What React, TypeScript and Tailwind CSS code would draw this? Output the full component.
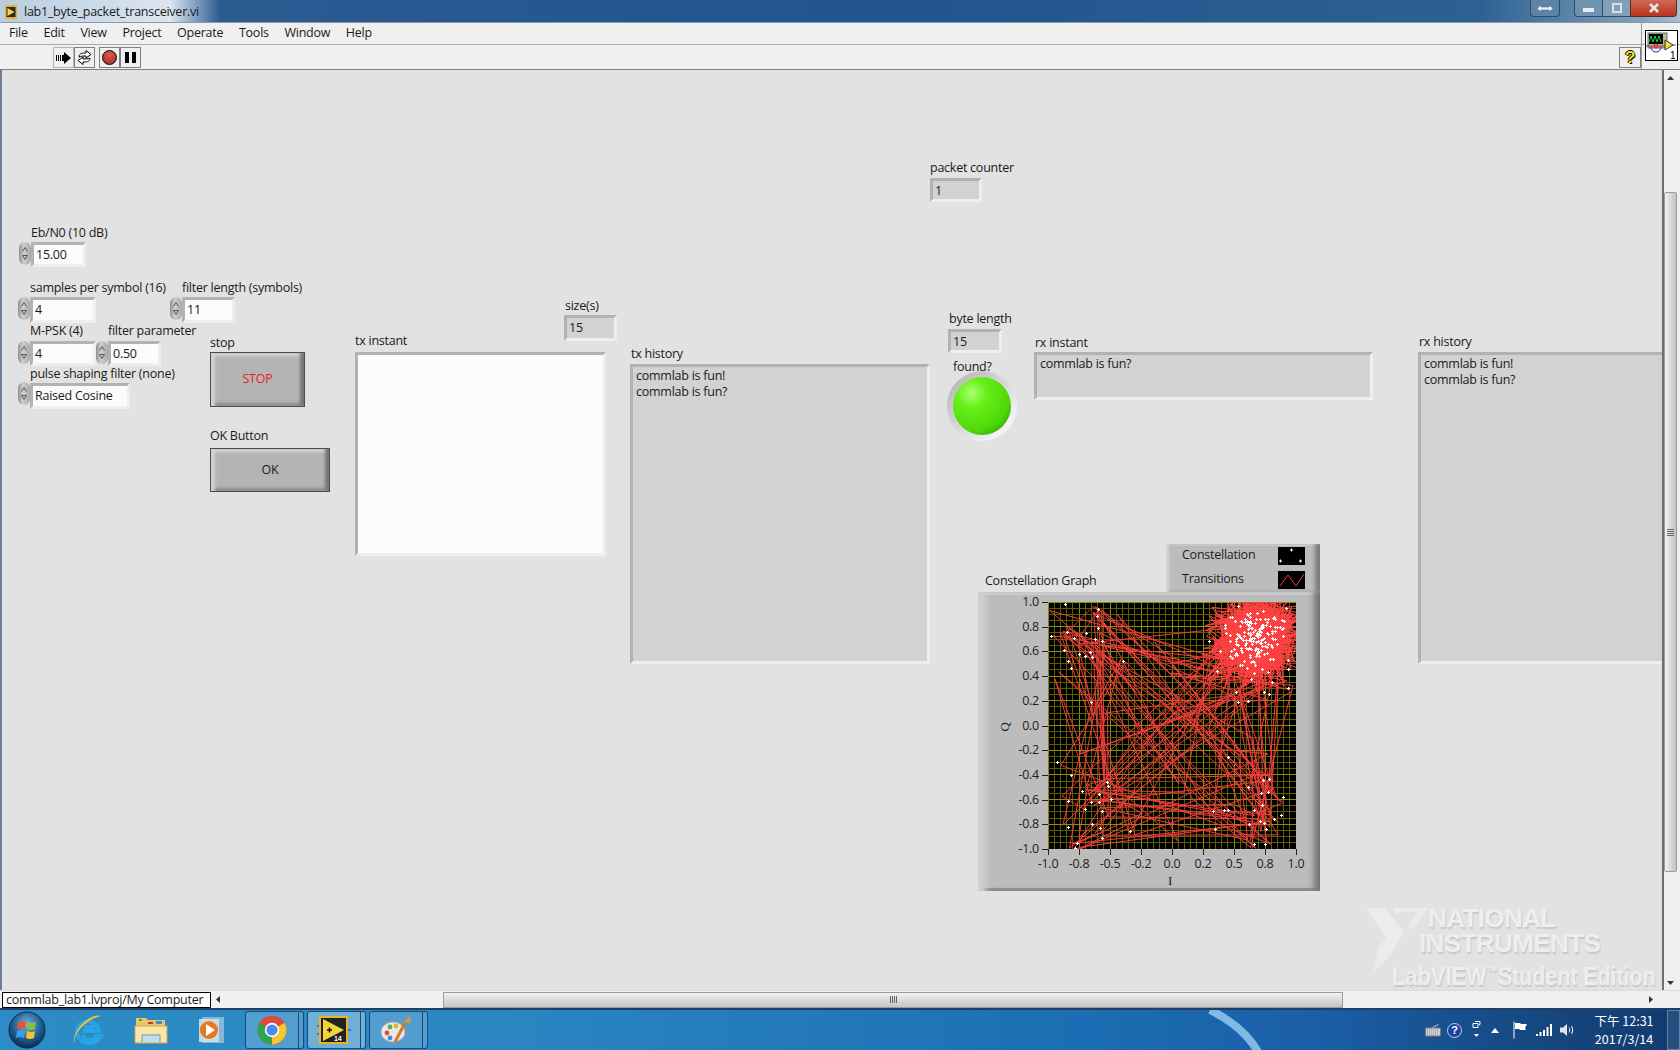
import React from "react";

type BoxProps = { className: string; children?: React.ReactNode };

const Label = ({ className, children }: BoxProps) => (
  <div className={`absolute h-[18px] whitespace-nowrap text-[12.5px] leading-[18px] text-[#1a1a1a] ${className}`}>{children}</div>
);

// sunken LabVIEW style frame, dark on top/left, light on bottom/right
const Frame = ({ className, children }: BoxProps) => (
  <div className={`absolute box-border border-[3px] border-t-[#b2b2b2] border-l-[#b2b2b2] border-r-[#eeeeee] border-b-[#eeeeee] text-[12.5px] leading-[16px] text-[#1a1a1a] ${className}`}>
    {children}
  </div>
);

// single line numeric or ring control
const Field = ({ className, children }: BoxProps) => (
  <Frame className={`px-[2px] pt-[2px] ${className}`}>{children}</Frame>
);

const Spinner = ({ className }: { className: string }) => (
  <div className={`absolute flex h-[23px] w-[12px] flex-col items-center justify-center gap-[3px] rounded-full bg-[linear-gradient(90deg,#8f8f8f,#cfcfcf_40%,#a8a8a8)] ${className}`}>
    <svg width="6" height="5" viewBox="0 0 6 5"><path d="M3 0.5 L5.5 4.5 M3 0.5 L0.5 4.5" stroke="#555" fill="none" /></svg>
    <svg width="6" height="5" viewBox="0 0 6 5"><path d="M0.5 0.5 H5.5 L3 4.5 Z" stroke="#555" fill="none" /></svg>
  </div>
);

const Bevel = ({ className, children }: BoxProps) => (
  <div className={`absolute box-border flex items-center justify-center border border-[#4c4c4c] bg-[#b4b4b4] text-[12.5px] shadow-[inset_5px_0_3px_-1px_#d2d2d2,inset_-5px_0_3px_-1px_#777777,inset_0_4px_3px_-1px_#d6d6d6,inset_0_-4px_3px_-1px_#8a8a8a] ${className}`}>
    {children}
  </div>
);

function mulberry(seed: number) {
  return () => {
    seed |= 0;
    seed = (seed + 0x6d2b79f5) | 0;
    let t = Math.imul(seed ^ (seed >>> 15), 1 | seed);
    t = (t + Math.imul(t ^ (t >>> 7), 61 | t)) ^ t;
    return ((t ^ (t >>> 14)) >>> 0) / 4294967296;
  };
}

// marker spots read off the reference, in zoomed crop pixels
const spots = [
  [436, 220], [536, 236], [532, 258], [535, 292], [442, 304], [500, 307], [394, 316], [463, 322], [527, 325], [547, 331],
  [432, 360], [511, 365], [478, 370], [496, 376], [517, 380], [445, 391], [610, 391], [454, 412], [514, 514],
  [412, 694], [454, 733], [562, 755], [565, 767], [488, 781], [538, 790], [574, 807], [446, 811], [515, 815], [538, 815],
  [495, 835], [547, 841], [517, 880], [446, 889], [542, 892], [632, 901], [547, 922], [472, 937], [465, 952],
  [925, 679], [1048, 745], [1030, 750], [985, 771], [1045, 785], [1024, 789], [1090, 799], [1026, 824], [913, 838], [924, 838],
  [1003, 838], [881, 841], [1083, 853], [1064, 865], [1022, 872], [1034, 877], [988, 880], [885, 895], [1040, 895], [1004, 940], [1037, 940],
  [950, 484], [1033, 484], [1048, 490], [955, 515], [985, 511], [1105, 472], [868, 331], [893, 421], [1057, 454], [994, 447],
].map(([x, y]) => [(x - 385) / 3, (y - 215) / 3]);

const rand = mulberry(20170314);
const gauss = () => (rand() + rand() + rand() + rand() - 2) * 1.7;

const cloud: number[][] = [];
for (let i = 0; i < 1100; i++) cloud.push([207 + gauss() * 20, 36 + gauss() * 19]);
const cloudMarks: number[][] = [];
for (let i = 0; i < 170; i++) cloudMarks.push([207 + gauss() * 15, 36 + gauss() * 15]);

// transitions mostly stay near the last symbol, some cross the whole plot
const walk: number[][] = [];
let at = 0;
for (let i = 0; i < 125; i++) {
  const r = rand();
  if (r < 0.08) {
    walk.push([206 + gauss() * 16, 38 + gauss() * 16]);
  } else {
    at = r < 0.42 ? (at + Math.floor(rand() * 7) + spots.length - 3) % spots.length : Math.floor(rand() * spots.length);
    const s = spots[at];
    walk.push([s[0] + (rand() - 0.5) * 14, s[1] + (rand() - 0.5) * 14]);
  }
  if (rand() < 0.4) walk.push([rand() * 248, rand() * 247]);
}

const toPoints = (pts: number[][]) => pts.map((p) => `${p[0].toFixed(1)},${p[1].toFixed(1)}`).join(" ");

const Grid = () => {
  const lines = [];
  for (let i = 0; i <= 40; i++) {
    const x = (i * 248) / 40;
    lines.push(<line key={`x${i}`} x1={x} x2={x} y1={0} y2={247} stroke={i % 5 === 0 ? "#8f8f00" : "#5e5e00"} />);
  }
  for (let i = 0; i <= 40; i++) {
    const y = (i * 247) / 40;
    lines.push(<line key={`y${i}`} x1={0} x2={248} y1={y} y2={y} stroke={i % 4 === 0 ? "#8f8f00" : "#5e5e00"} />);
  }
  return <g shapeRendering="crispEdges">{lines}</g>;
};

const Plus = ({ p }: { p: number[] }) => (
  <path d={`M${Math.round(p[0]) - 1.5} ${Math.round(p[1]) + 0.5}h3M${Math.round(p[0]) + 0.5} ${Math.round(p[1]) - 1.5}v3`} stroke="#ffffff" shapeRendering="crispEdges" />
);

const ConstellationPlot = () => (
  <svg width="248" height="247" viewBox="0 0 248 247" className="absolute left-[70px] top-[10px] bg-black">
    <Grid />
    <polyline points={toPoints(walk)} fill="none" stroke="#f33c3c" strokeWidth="1" />
    <polyline points={toPoints(cloud)} fill="none" stroke="#ff4242" strokeWidth="1" />
    {spots.map((p, i) => <Plus key={i} p={p} />)}
    {cloudMarks.map((p, i) => <Plus key={i} p={p} />)}
  </svg>
);

const yTicks = ["1.0", "0.8", "0.6", "0.4", "0.2", "0.0", "-0.2", "-0.4", "-0.6", "-0.8", "-1.0"];
const xTicks = ["-1.0", "-0.8", "-0.5", "-0.2", "0.0", "0.2", "0.5", "0.8", "1.0"];

const ConstellationGraph = () => (
  <>
    <div className="absolute left-[1166px] top-[474px] box-border h-[48px] w-[154px] overflow-hidden bg-[#bcbcbc] shadow-[inset_4px_0_3px_-1px_#d4d4d4,inset_-6px_0_4px_-1px_#7c7c7c,inset_0_2px_1px_#d8d8d8]">
      <div className="absolute left-[16px] top-[2px] text-[12.5px] leading-[18px] text-[#1c1c1c]">Constellation</div>
      <div className="absolute left-[16px] top-[26px] text-[12.5px] leading-[18px] text-[#1c1c1c]">Transitions</div>
      <svg className="absolute left-[112px] top-[3px]" width="27" height="18" viewBox="0 0 27 18">
        <rect width="27" height="18" fill="#000" />
        <path d="M12 3h3M13.5 1.5v3M1 14h3M2.5 12.5v3M21 14h3M22.5 12.5v3" stroke="#fff" />
      </svg>
      <svg className="absolute left-[112px] top-[27px]" width="27" height="18" viewBox="0 0 27 18">
        <rect width="27" height="18" fill="#000" />
        <path d="M2 15 L10 4 L18 15 L26 3" stroke="#e53a3a" fill="none" />
      </svg>
    </div>
    <div className="absolute left-[978px] top-[522px] h-[299px] w-[342px] overflow-hidden bg-[#bcbcbc] text-[12.5px] text-[#1c1c1c] shadow-[inset_12px_0_6px_-4px_#d0d0d0,inset_-9px_0_6px_-3px_#747474,inset_0_3px_1px_#d2d2d2,inset_0_-3px_1px_#8c8c8c]">
      <ConstellationPlot />
      {yTicks.map((t, i) => (
        <React.Fragment key={t}>
          <div className="absolute left-[11px] w-[50px] text-right leading-[16px]" style={{ top: 2 + (i * 247) / 10 }}>{t}</div>
          <div className="absolute left-[64px] h-px w-[6px] bg-[#222]" style={{ top: 10 + Math.round((i * 247) / 10) }} />
        </React.Fragment>
      ))}
      {xTicks.map((t, i) => (
        <React.Fragment key={t}>
          <div className="absolute top-[264px] w-[40px] text-center leading-[16px]" style={{ left: 50 + i * 31 }}>{t}</div>
          <div className="absolute top-[257px] h-[6px] w-px bg-[#222]" style={{ left: 70 + i * 31 }} />
        </React.Fragment>
      ))}
      <div className="absolute left-[190px] top-[281px] font-['Liberation_Serif',serif] text-[13px] leading-[16px]">I</div>
      <div className="absolute left-[22px] top-[127px] -rotate-90 font-['Liberation_Serif',serif] text-[13px] leading-[16px]">Q</div>
    </div>
  </>
);

const Watermark = () => (
  <div className="absolute left-[1360px] top-[830px] h-[160px] w-[300px] select-none whitespace-nowrap font-['Liberation_Sans',sans-serif] font-bold tracking-normal text-[#eeeeee] [text-shadow:1px_2px_1px_#c9c9c9]">
    <svg className="absolute left-[4px] top-[6px]" width="62" height="66" viewBox="0 0 62 66">
      <path d="M0 2 H18 L38 26 L24 50 L8 66 L12 42 L20 32 Z" fill="#ececec" />
      <path d="M26 2 H62 L46 24 L42 20 L52 6 H34 L30 8 Z" fill="#ececec" />
    </svg>
    <div className="absolute left-[66px] top-[6px] text-[26px] leading-[24px] tracking-[-0.6px]">NATIONAL</div>
    <div className="absolute left-[57px] top-[31px] text-[26px] leading-[24px] tracking-[-0.6px]">INSTRUMENTS</div>
    <div className="absolute left-[30px] top-[64px] origin-left scale-x-[0.84] text-[26px] leading-[24px]">LabVIEW</div>
    <div className="absolute left-[125px] top-[64px] text-[7px] leading-[10px]">TM</div>
    <div className="absolute left-[136px] top-[64px] origin-left scale-x-[0.82] text-[26px] leading-[24px]">Student Edition</div>
  </div>
);

const Led = () => (
  <div className="absolute left-[945px] top-[301px] flex h-[70px] w-[70px] items-center justify-center rounded-full bg-[linear-gradient(135deg,#b0b0b0,#f2f2f2_80%)]">
    <div className="h-[58px] w-[58px] rounded-full bg-[radial-gradient(circle_at_32%_28%,#aaff70_0,#66f018_26%,#4fd80a_66%,#2c7c08_100%)]" />
  </div>
);

const TitleBar = () => (
  <div className="flex h-[22px] shrink-0 items-center justify-between bg-[linear-gradient(90deg,#b9cde0_0,#dbe6f0_170px,#2a5c92_220px,#22548e_900px,#2d6192_1480px,#7fa0bb_1640px,#a9c0d2_100%)] pl-[5px]">
    <div className="flex items-center gap-[7px] pt-[2px]">
      <svg width="12" height="14" viewBox="0 0 12 14">
        <rect width="12" height="14" fill="#e9b227" />
        <rect x="1.5" y="2" width="9" height="10" fill="#2a2a2a" />
        <path d="M2.5 3 L9.5 7 L2.5 11 Z" fill="#f4d24a" />
      </svg>
      <span className="text-[12.5px] text-[#1a1a1a]">lab1_byte_packet_transceiver.vi</span>
    </div>
    <div className="flex h-[18px] self-start pr-[3px]">
      <div className="mr-[14px] flex h-[17px] w-[30px] items-center justify-center rounded-b-[4px] border border-t-0 border-[#2f4a66] bg-[#5c84a6] text-white">
        <svg width="18" height="9" viewBox="0 0 18 9"><path d="M1 4.5 L5 1 V3 H13 V1 L17 4.5 L13 8 V6 H5 V8 Z" fill="#e8eef4" stroke="#44607c" strokeWidth="0.5" /></svg>
      </div>
      <div className="flex h-[17px] w-[29px] items-center justify-center rounded-bl-[4px] border border-t-0 border-[#2f4a66] bg-[#6f93ae]">
        <div className="mt-[4px] h-[4px] w-[11px] bg-[#e6ecf1]" />
      </div>
      <div className="flex h-[17px] w-[27px] items-center justify-center border-b border-[#2f4a66] bg-[#7fa0b8]">
        <div className="h-[10px] w-[10px] border-2 border-[#d6dfe6]" />
      </div>
      <div className="flex h-[17px] w-[47px] items-center justify-center rounded-br-[4px] border border-t-0 border-[#5c2a22] bg-[linear-gradient(180deg,#cf6a55,#b8341f)]">
        <svg width="12" height="10" viewBox="0 0 12 10"><path d="M2 1 L10 9 M10 1 L2 9" stroke="#efe6e2" strokeWidth="2.6" /></svg>
      </div>
    </div>
  </div>
);

const menus = ["File", "Edit", "View", "Project", "Operate", "Tools", "Window", "Help"];

const MenuBar = () => (
  <div className="flex h-[23px] shrink-0 items-center gap-[15.7px] border-b border-[#a9a9a9] border-t border-t-[#8a9aa8] bg-[#f0f0f0] pl-[9px] pr-[38px] text-[12.5px] text-[#1a1a1a]">
    {menus.map((m) => <span key={m}>{m}</span>)}
  </div>
);

const ToolButton = ({ children, light }: { children: React.ReactNode; light?: boolean }) => (
  <div className={`box-border flex h-[21px] w-[21px] items-center justify-center border ${light ? "border-[#b5b5b5]" : "border-[#808080]"}`}>{children}</div>
);

const Toolbar = () => (
  <div className="flex h-[25px] shrink-0 items-center justify-between border-b border-[#7d7d7d] bg-[#f0f0f0] pl-[53px] pr-[39px] pt-px">
    <div className="flex items-center gap-[4px]">
      <div className="flex">
        <ToolButton light>
          <svg width="16" height="12" viewBox="0 0 16 12"><path d="M0 3h1v6H0zM2 3h1v6H2zM4 3h1v6H4zM6 3h2V0l7 6-7 6V9H6z" fill="#000" /></svg>
        </ToolButton>
        <ToolButton>
          <svg width="17" height="15" viewBox="0 0 17 15">
            <path d="M3 7 C3 3 7 3 10 3 V0.5 L15 4.500 L10 8 V6 C7 6 5 6 3 7 Z" fill="#fff" stroke="#000" />
            <path d="M14 8 C14 12 10 12 7 12 V14.5 L2 10.500 L7 7 V9 C10 9 12 9 14 8 Z" fill="#fff" stroke="#000" />
          </svg>
        </ToolButton>
      </div>
      <div className="flex">
        <ToolButton>
          <div className="h-[15px] w-[15px] rounded-full border border-black bg-[radial-gradient(circle_at_50%_30%,#d85a50,#a92a24)]" />
        </ToolButton>
        <ToolButton>
          <div className="flex gap-[3px]">
            <div className="h-[11px] w-[4px] bg-black" />
            <div className="h-[11px] w-[4px] bg-black" />
          </div>
        </ToolButton>
      </div>
    </div>
    <div className="flex h-[21px] w-[22px] items-center justify-center border border-[#808080] font-['Liberation_Sans',sans-serif] text-[17px] font-bold leading-none text-[#f4e200] [text-shadow:1px_1px_0_#000,-1px_0_0_#000,0_-1px_0_#000]">?</div>
  </div>
);

const VScrollbar = () => (
  <div className="flex w-[18px] shrink-0 flex-col border-l-2 border-[#6f6f6f] bg-[#f0f0f0] pr-[3px]">
    <div className="flex h-[16px] shrink-0 items-center justify-center text-[#222]">
      <svg width="7" height="4" viewBox="0 0 7 4"><path d="M0 4 L3.5 0 L7 4 Z" fill="#333" /></svg>
    </div>
    <div className="h-[106px] shrink-0" />
    <div className="flex h-[680px] shrink-0 items-center justify-center rounded-[2px] border border-[#9a9a9a] bg-[linear-gradient(90deg,#f2f2f2,#d4d4d4_60%,#c4c4c4)]">
      <div className="flex w-[7px] flex-col gap-[1px]">
        <div className="h-px bg-[#666]" /><div className="h-px bg-[#666]" /><div className="h-px bg-[#666]" /><div className="h-px bg-[#666]" />
      </div>
    </div>
    <div className="flex-1" />
    <div className="flex h-[14px] shrink-0 items-center justify-center">
      <svg width="7" height="4" viewBox="0 0 7 4"><path d="M0 0 L3.5 4 L7 0 Z" fill="#333" /></svg>
    </div>
  </div>
);

const HScrollbar = () => (
  <div className="flex h-[18px] shrink-0 items-center border-t border-[#dadada] bg-[#f0f0f0] pl-[2px] pr-[3px]">
    <div className="box-border h-[16px] w-[209px] shrink-0 whitespace-nowrap border border-black bg-white pl-[3px] text-[12.5px] leading-[13px] text-[#1a1a1a]">commlab_lab1.lvproj/My Computer</div>
    <svg className="ml-[5px] shrink-0" width="4" height="7" viewBox="0 0 4 7"><path d="M4 0 L0 3.5 L4 7 Z" fill="#333" /></svg>
    <div className="w-[223px] shrink-0" />
    <div className="flex h-[16px] w-[900px] shrink-0 items-center justify-center border border-[#9a9a9a] bg-[linear-gradient(180deg,#f2f2f2,#d6d6d6_60%,#c6c6c6)]">
      <div className="flex h-[7px] gap-[1px]">
        <div className="w-px bg-[#666]" /><div className="w-px bg-[#666]" /><div className="w-px bg-[#666]" /><div className="w-px bg-[#666]" />
      </div>
    </div>
    <div className="flex-1" />
    <svg className="mr-[24px] shrink-0" width="4" height="7" viewBox="0 0 4 7"><path d="M0 0 L4 3.5 L0 7 Z" fill="#333" /></svg>
  </div>
);

const StartOrb = () => (
  <svg width="38" height="38" viewBox="0 0 38 38">
    <defs>
      <radialGradient id="orb" cx="50%" cy="35%" r="65%">
        <stop offset="0" stopColor="#7fb4dc" />
        <stop offset="0.6" stopColor="#1f5f94" />
        <stop offset="1" stopColor="#0b2c4e" />
      </radialGradient>
    </defs>
    <circle cx="19" cy="19" r="18" fill="url(#orb)" stroke="#0d2b47" />
    <path d="M10 12 Q14 9 18 11 L17 18 Q13 16 9 18 Z" fill="#e8552e" />
    <path d="M20 11 Q24 13 28 11 L27 18 Q23 20 19 18 Z" fill="#82c341" />
    <path d="M9 20 Q13 18 17 20 L16 27 Q12 25 8 27 Z" fill="#3a9ee0" />
    <path d="M19 20 Q23 22 27 20 L26 27 Q22 29 18 27 Z" fill="#f7c325" />
  </svg>
);

const IEIcon = () => (
  <svg width="32" height="34" viewBox="0 0 32 34">
    <path d="M5 21 A11 11 0 1 1 27 18 H11 M12 14 H22 M11 22 A7 7 0 0 0 24 23 H29 A13 13 0 0 1 5 21" fill="none" stroke="#27a4e4" strokeWidth="4" />
    <path d="M3 30 C0 22 14 6 29 3 C24 1 16 5 10 11 C4 17 0 27 3 30 Z" fill="#f2c438" />
  </svg>
);

const FolderIcon = () => (
  <svg width="34" height="30" viewBox="0 0 34 30">
    <path d="M2 3 H12 L14 5 H31 V14 H2 Z" fill="#e9c66a" />
    <rect x="5" y="4" width="3" height="2" fill="#46a049" />
    <rect x="14" y="7" width="5" height="2" fill="#c8382c" />
    <rect x="22" y="6" width="6" height="3" fill="#3a8fd6" />
    <path d="M1 11 H33 V28 H1 Z" fill="#f8e6a8" stroke="#c9a95a" />
    <path d="M8 27 V20 H26 V27" fill="#c4dced" stroke="#7a93a6" />
  </svg>
);

const MediaIcon = () => (
  <svg width="28" height="32" viewBox="0 0 28 32">
    <rect x="4" y="3" width="22" height="26" fill="#9bc3dd" opacity="0.8" />
    <rect x="1" y="5" width="20" height="23" fill="#cfe0ea" opacity="0.9" />
    <circle cx="11" cy="16" r="9" fill="#e9771f" />
    <path d="M8 10 L17 16 L8 22 Z" fill="#ffffff" />
  </svg>
);

const ChromeIcon = () => (
  <svg width="30" height="30" viewBox="0 0 30 30">
    <circle cx="15" cy="15" r="14.5" fill="#dd4b3e" />
    <path d="M15 15 L27.6 7.8 A14.5 14.5 0 0 1 15 29.5 Z" fill="#f7c52d" />
    <path d="M15 15 L15 29.5 A14.5 14.5 0 0 1 2.4 7.8 Z" fill="#2fa44f" />
    <circle cx="15" cy="15" r="7.2" fill="#ffffff" />
    <circle cx="15" cy="15" r="5.6" fill="#4a8af4" />
  </svg>
);

const LabviewIcon = () => (
  <svg width="34" height="28" viewBox="0 0 34 28">
    <path d="M0 10h4M0 18h4M29 14h5" stroke="#3a78c0" strokeWidth="2" />
    <rect x="3" y="1" width="27" height="26" fill="#222" stroke="#e9b227" strokeWidth="2" />
    <path d="M6 3 L27 14 L6 25 Z" fill="#f2d33a" />
    <path d="M10 14h5M12.5 11.5v5" stroke="#111" strokeWidth="1.5" />
    <text x="17" y="25" fontSize="7" fontWeight="700" fill="#fff" fontFamily="Liberation Sans, sans-serif">14</text>
  </svg>
);

const PaintIcon = () => (
  <svg width="32" height="30" viewBox="0 0 32 30">
    <ellipse cx="13" cy="17" rx="12" ry="10" fill="#e8e8ea" stroke="#b0b0b8" />
    <circle cx="7" cy="18" r="2.4" fill="#e0483c" />
    <circle cx="10" cy="12" r="2.4" fill="#58b04a" />
    <circle cx="16" cy="11" r="2.4" fill="#e9b227" />
    <circle cx="10" cy="23" r="2.4" fill="#3f8ed6" />
    <path d="M15 27 L26 6" stroke="#d97a1e" strokeWidth="3" />
    <path d="M24 7 L30 0 L31 8 Z" fill="#c79a5c" />
  </svg>
);

const TaskButton = ({ className, children }: { className: string; children: React.ReactNode }) => (
  <div className="flex h-[38px] w-[59px] shrink-0">
    <div className={`flex w-[54px] items-center justify-center rounded-l-[3px] border border-[#174a78] ${className}`}>{children}</div>
    <div className={`w-[5px] rounded-r-[3px] border border-l-0 border-[#174a78] ${className}`} />
  </div>
);

const Taskbar = () => (
  <div className="relative flex h-[42px] shrink-0 items-center overflow-hidden border-t-[2px] border-[#1f3f66] bg-[linear-gradient(90deg,#2c8cc6_0,#2b86c2_30%,#1c6db3_65%,#1b5fa8_78%,#16477f_92%,#123a70_100%)]">
    <svg className="absolute left-[1196px] top-0" width="90" height="42" viewBox="0 0 90 42">
      <path d="M14 0 C34 10 52 24 62 42" fill="none" stroke="#9ccdf2" strokeWidth="8" opacity="0.8" />
    </svg>
    <div className="relative flex h-full w-full items-center">
      <div className="ml-[8px] w-[56px] shrink-0"><StartOrb /></div>
      <div className="ml-[8px] flex w-[62px] shrink-0 justify-start"><IEIcon /></div>
      <div className="flex w-[64px] shrink-0 justify-start"><FolderIcon /></div>
      <div className="flex w-[47px] shrink-0 justify-start"><MediaIcon /></div>
      <TaskButton className="bg-[#ffffff30]"><ChromeIcon /></TaskButton>
      <div className="ml-[3px]"><TaskButton className="bg-[#ffffff55]"><LabviewIcon /></TaskButton></div>
      <div className="ml-[3px]"><TaskButton className="bg-[#ffffff30]"><PaintIcon /></TaskButton></div>
      <div className="ml-auto flex h-full items-center">
        <svg width="16" height="14" viewBox="0 0 16 14"><rect x="0.5" y="5" width="15" height="8" rx="1" fill="#cfd3d6" stroke="#777" /><path d="M2 7h12M2 9h12M2 11h12" stroke="#888" strokeDasharray="1 1" /><path d="M8 5 C8 2 13 4 13 1" stroke="#ccc" fill="none" /></svg>
        <div className="ml-[6px] flex h-[15px] w-[15px] items-center justify-center rounded-full border border-[#c4d2e0] bg-[#1d3fa8] font-['Liberation_Sans',sans-serif] text-[11px] font-bold leading-none text-white">?</div>
        <svg className="ml-[10px]" width="9" height="20" viewBox="0 0 9 20"><path d="M3 1.5h5v3h-1M1 3.5h5v4H1z" fill="none" stroke="#fff" /><path d="M2 14h5l-2.5 3z" fill="#fff" /></svg>
        <svg className="ml-[10px]" width="8" height="5" viewBox="0 0 8 5"><path d="M0 5 L4 0 L8 5 Z" fill="#fff" /></svg>
        <svg className="ml-[14px]" width="14" height="18" viewBox="0 0 14 18"><path d="M1 0.5 V17.5" stroke="#fff" /><path d="M2 2 H7 L8 3 H14 L12 7 L13 9 H7 L6 8 H2 Z" fill="#fff" /></svg>
        <svg className="ml-[9px]" width="16" height="12" viewBox="0 0 16 12"><path d="M0 10h2v2H0zM3.5 8h2v4h-2zM7 6h2v6H7zM10.5 3h2v9h-2zM14 0h2v12h-2z" fill="#fff" /></svg>
        <svg className="ml-[8px]" width="15" height="14" viewBox="0 0 15 14"><path d="M0 4.5h3L7 1v12L3 9.5H0z" fill="#dfe6ec" /><path d="M9 4.5c1 1.5 1 3.5 0 5M11.5 3c1.6 2.5 1.6 5.500 0 8" stroke="#fff" fill="none" /></svg>
        <div className="ml-[13px] w-[72px] text-center font-['Noto_Sans_CJK_TC','Liberation_Sans',sans-serif] text-[12.5px] leading-[18px] tracking-normal text-white">
          <div>下午 12:31</div>
          <div>2017/3/14</div>
        </div>
        <div className="ml-[7px] h-full w-[13px] border border-[#5c86a8] bg-[#ffffff18]" />
      </div>
    </div>
  </div>
);

export default function App() {
  return (
    <div className="flex h-[1050px] w-[1680px] flex-col overflow-hidden bg-[#e2e2e2] font-['Open_Sans','Liberation_Sans',sans-serif] tracking-[-0.25px]">
      <TitleBar />
      <div className="relative flex min-h-0 flex-1 flex-col">
        <MenuBar />
        <Toolbar />
        <div className="absolute right-[38px] top-0 h-[47px] w-px bg-[#9a9a9a]" />
        <div className="absolute left-[1645px] top-[8px] z-10 h-[31px] w-[33px] overflow-hidden border border-black bg-white">
          <svg width="31" height="29" viewBox="0 0 31 29">
            <rect x="2" y="2" width="19" height="15" fill="#b9b9a8" stroke="#666" />
            <rect x="3" y="3" width="14" height="10" fill="#000" />
            <path d="M3 11 L5 5 L7 11 L9 5 L11 11 L13 5 L15 11" stroke="#18d030" fill="none" />
            <path d="M0 15h19M20 14h10" stroke="#c02020" />
            <path d="M5 16 a5 5 0 0 0 10 0" fill="none" stroke="#2020c0" />
            <circle cx="10" cy="15" r="2" fill="none" stroke="#d02020" />
            <path d="M19 9 L27 14 L19 19 Z" fill="#f4e22a" stroke="#333" />
            <text x="24" y="28" fontSize="10" fill="#000" fontFamily="Liberation Sans, sans-serif">1</text>
          </svg>
        </div>
        <div className="flex min-h-0 flex-1 border-l-2 border-[#6c7f94]">
          <div className="relative flex-1 overflow-hidden bg-[#e2e2e2]">
            <Label className="left-[29px] top-[154px]">Eb/N0 (10 dB)</Label>
            <Spinner className="left-[17px] top-[172px]" />
            <Field className="left-[29px] top-[172px] h-[25px] w-[55px] bg-[#fbfbfb]">15.00</Field>

            <Label className="left-[28px] top-[209px]">samples per symbol (16)</Label>
            <Spinner className="left-[16px] top-[227px]" />
            <Field className="left-[28px] top-[227px] h-[26px] w-[66px] bg-[#fbfbfb]">4</Field>
            <Label className="left-[180px] top-[209px]">filter length (symbols)</Label>
            <Spinner className="left-[168px] top-[227px]" />
            <Field className="left-[180px] top-[227px] h-[26px] w-[53px] bg-[#fbfbfb]">11</Field>

            <Label className="left-[28px] top-[252px]">M-PSK (4)</Label>
            <Spinner className="left-[16px] top-[271px]" />
            <Field className="left-[28px] top-[271px] h-[25px] w-[66px] bg-[#fbfbfb]">4</Field>
            <Label className="left-[106px] top-[252px]">filter parameter</Label>
            <Spinner className="left-[94px] top-[271px]" />
            <Field className="left-[106px] top-[271px] h-[25px] w-[53px] bg-[#fbfbfb]">0.50</Field>

            <Label className="left-[28px] top-[295px]">pulse shaping filter (none)</Label>
            <Spinner className="left-[16px] top-[312px]" />
            <Field className="left-[28px] top-[313px] h-[26px] w-[100px] bg-[#fbfbfb]">Raised Cosine</Field>

            <Label className="left-[208px] top-[264px]">stop</Label>
            <Bevel className="left-[208px] top-[282px] h-[55px] w-[95px] text-[#f01c1c]">STOP</Bevel>
            <Label className="left-[208px] top-[357px]">OK Button</Label>
            <Bevel className="left-[208px] top-[378px] h-[44px] w-[120px] text-[#1a1a1a]">OK</Bevel>

            <Label className="left-[353px] top-[262px]">tx instant</Label>
            <Frame className="left-[353px] top-[282px] h-[204px] w-[251px] bg-[#fcfcfc]" />
            <Label className="left-[563px] top-[227px]">size(s)</Label>
            <Field className="left-[562px] top-[245px] h-[26px] w-[53px] bg-[#d2d2d2]">15</Field>
            <Label className="left-[629px] top-[275px]">tx history</Label>
            <Frame className="left-[628px] top-[294px] h-[300px] w-[300px] bg-[#d2d2d2] px-[3px] pt-px">
              <div>commlab is fun!</div>
              <div>commlab is fun?</div>
            </Frame>

            <Label className="left-[928px] top-[89px]">packet counter</Label>
            <Field className="left-[928px] top-[108px] h-[24px] w-[52px] bg-[#d2d2d2]">1</Field>
            <Label className="left-[947px] top-[240px]">byte length</Label>
            <Field className="left-[946px] top-[259px] h-[24px] w-[54px] bg-[#d2d2d2]">15</Field>
            <Label className="left-[951px] top-[288px]">found?</Label>
            <Led />
            <Label className="left-[1033px] top-[264px]">rx instant</Label>
            <Frame className="left-[1032px] top-[282px] h-[48px] w-[339px] bg-[#d2d2d2] px-[3px] pt-px">commlab is fun?</Frame>
            <Label className="left-[1417px] top-[263px]">rx history</Label>
            <Frame className="left-[1416px] top-[282px] h-[312px] w-[320px] bg-[#d2d2d2] px-[3px] pt-px">
              <div>commlab is fun!</div>
              <div>commlab is fun?</div>
            </Frame>

            <Label className="left-[983px] top-[502px]">Constellation Graph</Label>
            <div className="absolute left-[-2px] top-0">
              <ConstellationGraph />
            </div>
            <Watermark />
          </div>
          <VScrollbar />
        </div>
        <HScrollbar />
      </div>
      <Taskbar />
    </div>
  );
}
